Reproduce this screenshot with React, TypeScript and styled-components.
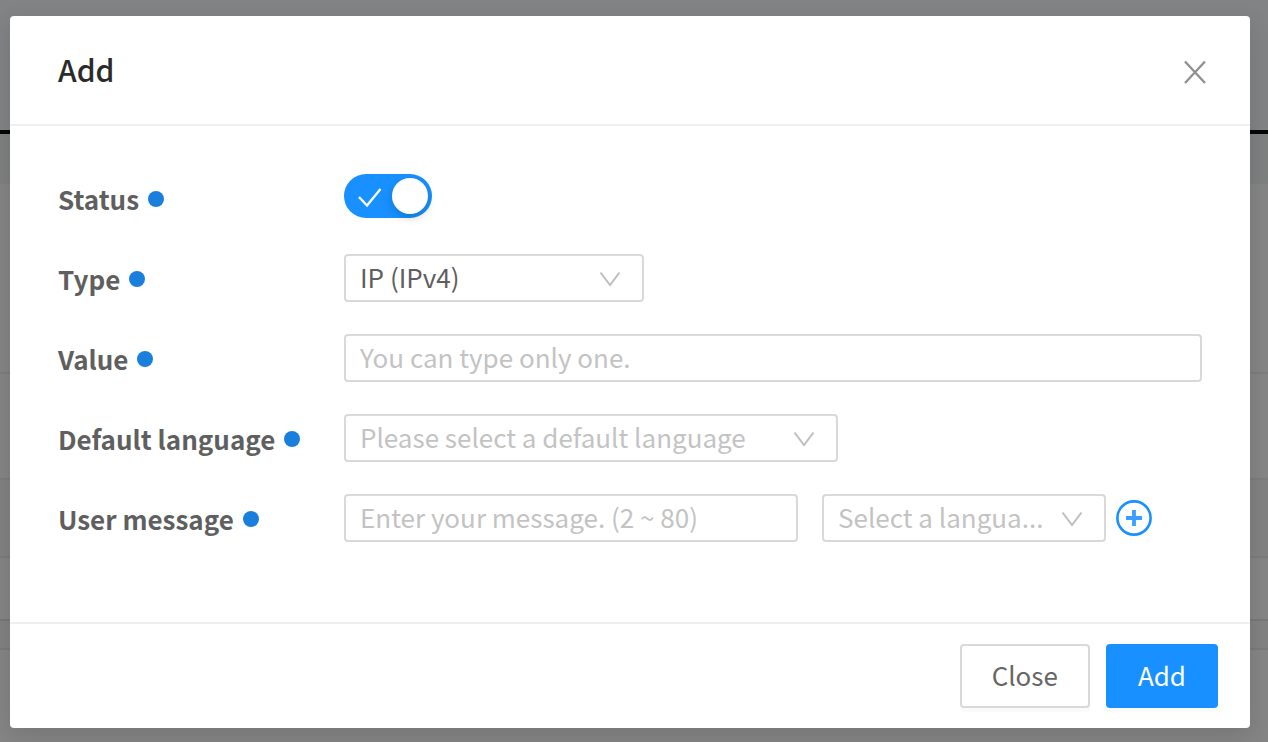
import React, { useState } from "react";
import styled, { createGlobalStyle } from "styled-components";

const GlobalStyle = createGlobalStyle`
  *, *::before, *::after { box-sizing: border-box; }
  body {
    margin: 0;
    background: #858585;
    font-family: "Noto Sans CJK KR", "Noto Sans", sans-serif;
    font-size: 26px;
    line-height: 40px;
    color: #5f5f5f;
  }
  button, input, select { font: inherit; color: inherit; margin: 0; }
`;

const Screen = styled.div`
  display: grid;
  min-height: 100vh;
`;

const Backdrop = styled.div`
  grid-area: 1 / 1;
  display: flex;
  flex-direction: column;
`;

const Band = styled.div<{ $height: number; $tone: string; $line?: string; $weight?: number }>`
  height: ${(p) => p.$height}px;
  background: ${(p) => p.$tone};
  border-bottom: ${(p) => p.$weight ?? 2}px solid ${(p) => p.$line ?? p.$tone};
`;

const Dialog = styled.form`
  grid-area: 1 / 1;
  position: relative;
  align-self: start;
  margin: 16px 18px 14px 10px;
  background: #fff;
  border-radius: 4px;
  box-shadow: 0 8px 24px rgba(0, 0, 0, 0.12);
`;

const Header = styled.header`
  display: flex;
  align-items: center;
  justify-content: space-between;
  height: 110px;
  padding: 0 40px 0 48px;
  border-bottom: 2px solid #f0f0f0;
`;

const Title = styled.h1`
  margin: 0;
  padding-bottom: 2px;
  font-size: 30px;
  font-weight: 500;
  line-height: 40px;
  color: #2b2b2b;
`;

const IconButton = styled.button`
  display: flex;
  flex: none;
  padding: 0;
  border: 0;
  background: none;
  cursor: pointer;
`;

const DismissButton = styled(IconButton)`
  padding-top: 4px;
`;

const Body = styled.div`
  display: flex;
  flex-direction: column;
  gap: 32px;
  padding: 48px 48px 80px;
`;

const Row = styled.div`
  display: grid;
  grid-template-columns: 286px minmax(0, 1fr);
  align-items: center;
  height: 48px;
`;

const Label = styled.label`
  display: flex;
  align-items: center;
  gap: 9px;
  padding-top: 2px;
  font-weight: 700;
  white-space: nowrap;

  &::after {
    content: "";
    width: 16px;
    height: 16px;
    border-radius: 50%;
    background: #1a7fdc;
  }
`;

const Fields = styled.div`
  display: flex;
  align-items: center;
  gap: 24px;
`;

const LanguagePicker = styled.div`
  display: flex;
  align-items: center;
  gap: 10px;
`;

const TextInput = styled.input<{ $width?: string }>`
  width: ${(p) => p.$width ?? "100%"};
  height: 48px;
  padding: 0 14px 4px;
  border: 2px solid #d9d9d9;
  border-radius: 4px;
  background: #fff;
  outline: none;

  &::placeholder { color: #c3c3c3; opacity: 1; }
`;

const SelectBox = styled.div<{ $width: string }>`
  position: relative;
  width: ${(p) => p.$width};
`;

const Select = styled.select<{ $empty?: boolean }>`
  appearance: none;
  display: block;
  width: 100%;
  height: 48px;
  padding: 0 50px 2px 14px;
  border: 2px solid #d9d9d9;
  border-radius: 4px;
  background: #fff;
  color: ${(p) => (p.$empty ? "#c3c3c3" : "#5f5f5f")};
  outline: none;
`;

const Chevron = styled.svg`
  position: absolute;
  top: 16px;
  right: 23px;
  pointer-events: none;
`;

const Switch = styled.div`
  position: relative;
  width: 88px;
  height: 44px;
  margin-bottom: 4px;
`;

const SwitchInput = styled.input`
  appearance: none;
  display: block;
  width: 88px;
  height: 44px;
  padding: 4px;
  border-radius: 22px;
  background: #bfbfbf;
  cursor: pointer;

  &::before {
    content: "";
    display: block;
    width: 36px;
    height: 36px;
    border-radius: 50%;
    background: #fff;
    box-shadow: 0 4px 8px rgba(0, 35, 11, 0.2);
  }
  &:checked { background: #1890ff; }
  &:checked::before { margin-left: auto; }
`;

const SwitchMark = styled.svg`
  position: absolute;
  top: 14px;
  left: 14px;
  pointer-events: none;
`;

const Footer = styled.footer`
  display: flex;
  justify-content: flex-end;
  gap: 16px;
  padding: 20px 32px;
  border-top: 2px solid #f0f0f0;
`;

const Button = styled.button<{ $primary?: boolean }>`
  height: 64px;
  padding: 0 30px 2px;
  border: 2px solid ${(p) => (p.$primary ? "#1890ff" : "#d9d9d9")};
  border-radius: 4px;
  background: ${(p) => (p.$primary ? "#1890ff" : "#fff")};
  color: ${(p) => (p.$primary ? "#fff" : "#666")};
  box-shadow: 0 4px 0 rgba(0, 0, 0, 0.02);
  cursor: pointer;
`;

const Dropdown = ({ id, label, width, options, empty }: {
  id: string; label?: string; width: string; options: string[]; empty?: boolean;
}) => (
  <SelectBox $width={width}>
    <Select id={id} aria-label={label} $empty={empty}>
      {options.map((o) => <option key={o}>{o}</option>)}
    </Select>
    <Chevron width="22" height="18" viewBox="0 0 22 18" fill="none" stroke="#bfbfbf" strokeWidth="2">
      <path d="M1.5 2.5 L11 15 L20.5 2.5" />
    </Chevron>
  </SelectBox>
);

export default function App() {
  const [active, setActive] = useState(true);
  return (
    <>
      <GlobalStyle />
      <Screen>
        <Backdrop aria-hidden="true">
          <Band $height={134} $tone="#828384" $line="#060606" $weight={4} />
          <Band $height={50} $tone="#7e8081" />
          <Band $height={190} $tone="#858585" $line="#7d7d7d" />
          <Band $height={106} $tone="#858585" $line="#7d7d7d" />
          <Band $height={78} $tone="#828282" $line="#7c7c7c" />
          <Band $height={63} $tone="#858585" $line="#777777" />
          <Band $height={29} $tone="#828282" $line="#7b7b7b" />
        </Backdrop>
        <Dialog role="dialog" aria-labelledby="dialog-title" onSubmit={(e) => e.preventDefault()}>
          <Header>
            <Title id="dialog-title">Add</Title>
            <DismissButton type="button" aria-label="Dismiss">
              <svg width="30" height="30" viewBox="0 0 30 30" fill="none" stroke="#919191" strokeWidth="2.4">
                <path d="M5 4.5 L25 26 M25 4.5 L5 26" />
              </svg>
            </DismissButton>
          </Header>
          <Body>
            <Row>
              <Label htmlFor="status">Status</Label>
              <Switch>
                <SwitchInput id="status" type="checkbox" role="switch" checked={active}
                  onChange={(e) => setActive(e.target.checked)} />
                {active && (
                  <SwitchMark width="24" height="20" viewBox="0 0 24 20" fill="none" stroke="#fff" strokeWidth="2.4">
                    <path d="M1 9 L9 17.5 L22.5 1" />
                  </SwitchMark>
                )}
              </Switch>
            </Row>
            <Row>
              <Label htmlFor="type">Type</Label>
              <Dropdown id="type" width="300px" options={["IP (IPv4)"]} />
            </Row>
            <Row>
              <Label htmlFor="value">Value</Label>
              <TextInput id="value" placeholder="You can type only one." />
            </Row>
            <Row>
              <Label htmlFor="language">Default language</Label>
              <Dropdown id="language" width="494px" options={["Please select a default language"]} empty />
            </Row>
            <Row>
              <Label htmlFor="message">User message</Label>
              <Fields>
                <TextInput id="message" $width="454px" placeholder="Enter your message. (2 ~ 80)" />
                <LanguagePicker>
                  <Dropdown id="message-language" label="Message language" width="284px" options={["Select a langua..."]} empty />
                  <IconButton type="button" aria-label="Add message">
                    <svg width="36" height="36" viewBox="0 0 36 36" fill="none" stroke="#1890ff">
                      <circle cx="18" cy="18" r="16.6" strokeWidth="2.6" />
                      <path d="M18 10 V26 M10 18 H26" strokeWidth="3.8" stroke="#3b9fff" />
                    </svg>
                  </IconButton>
                </LanguagePicker>
              </Fields>
            </Row>
          </Body>
          <Footer>
            <Button type="button">Close</Button>
            <Button type="submit" $primary>Add</Button>
          </Footer>
        </Dialog>
      </Screen>
    </>
  );
}
